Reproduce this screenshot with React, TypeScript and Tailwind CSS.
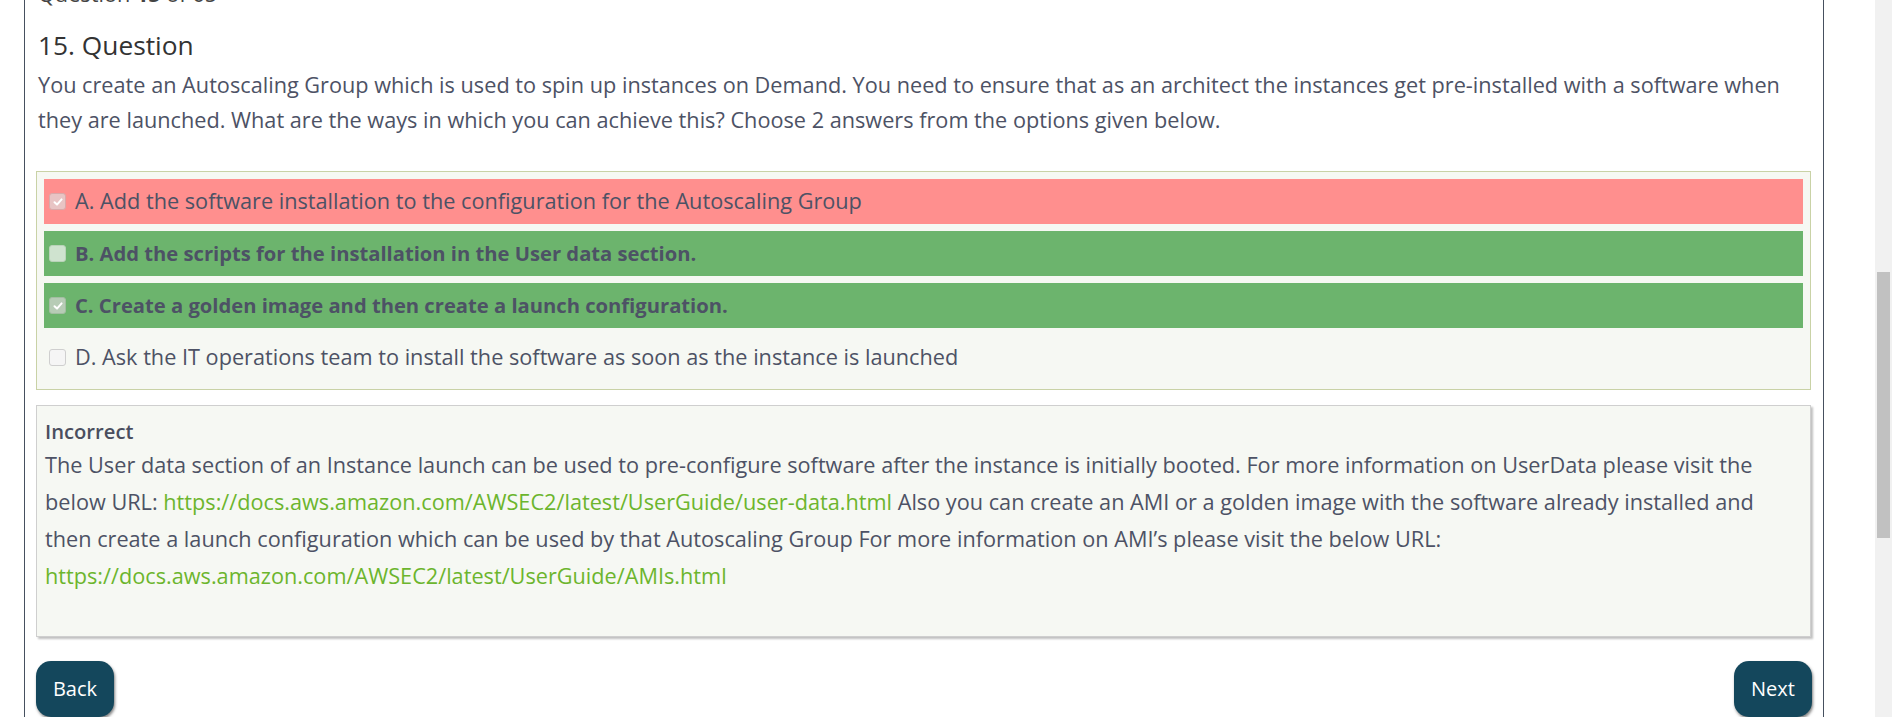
import React from "react";

const font = { fontFamily: '"Open Sans", "Noto Sans", sans-serif' };

function Check({ checked, variant }: { checked: boolean; variant: "red" | "green" | "plain" }) {
  const cls =
    variant === "red"
      ? "bg-[#e8c4c4] border-[#d9a9a9]"
      : variant === "green"
      ? checked
        ? "bg-[#b7ccb6] border-[#a3bda2]"
        : "bg-[#cfe3cf] border-[#b9d3b9]"
      : "bg-[#f5f5f5] border-[#cfcfcf]";
  return (
    <span className={`inline-flex items-center justify-center w-[17px] h-[17px] rounded-[3px] border ${cls} mr-[9px] shrink-0`}>
      {checked && (
        <svg width="12" height="12" viewBox="0 0 12 12">
          <path d="M2.5 6.3 L5 8.6 L9.6 3.4" fill="none" stroke="#ffffff" strokeWidth="2" strokeLinecap="round" strokeLinejoin="round" />
        </svg>
      )}
    </span>
  );
}

function Option({
  text,
  bg,
  bold,
  checked,
  variant,
}: {
  text: string;
  bg: string;
  bold?: boolean;
  checked: boolean;
  variant: "red" | "green" | "plain";
}) {
  return (
    <div className={`flex items-center h-[45px] pl-[5px] ${bg}`}>
      <Check checked={checked} variant={variant} />
      <span className={`${bold ? "font-bold text-[20.2px]" : "text-[21.7px]"} text-[#4d5265] whitespace-nowrap`}>{text}</span>
    </div>
  );
}

export default function App() {
  return (
    <div className="flex h-[717px] w-[1892px] overflow-hidden bg-white" style={font}>
      <div className="flex-1 flex">
        <div className="ml-[24px] w-[1800px] border-l border-r border-[#46505f] px-[11px] flex flex-col">
          <div className="-mt-[19px] h-[26px] text-[21.7px] leading-[26px] text-[#444] pl-[2px]">
            Question <span className="font-bold">15</span> of 65
          </div>
          <div className="mt-[22px] text-[26.3px] leading-[32px] text-[#333] pl-[2px]">15. Question</div>
          <p className="mt-[6px] text-[21.7px] leading-[35px] text-[#4d5265] pl-[2px]">
            You create an Autoscaling Group which is used to spin up instances on Demand. You need to ensure that as an architect the instances get pre-installed with a software when they are launched. What are the ways in which you can achieve this? Choose 2 answers from the options given below.
          </p>
          <div className="mt-[34px] border border-[#c9d2a6] bg-[#f6f8f3] px-[7px] pt-[7px] pb-[9px] flex flex-col gap-[7px] w-[1775px]">
            <Option text="A. Add the software installation to the configuration for the Autoscaling Group" bg="bg-[#ff8f8e]" checked variant="red" />
            <Option text="B. Add the scripts for the installation in the User data section." bg="bg-[#6cb46d]" bold checked={false} variant="green" />
            <Option text="C. Create a golden image and then create a launch configuration." bg="bg-[#6cb46d]" bold checked variant="green" />
            <Option text="D. Ask the IT operations team to install the software as soon as the instance is launched" bg="" checked={false} variant="plain" />
          </div>
          <div className="mt-[15px] w-[1775px] h-[232px] border border-[#cfcfcf] bg-[#f6f8f3] shadow-[2px_2px_2px_rgba(0,0,0,0.25)] px-[8px] pt-[12px]">
            <div className="text-[20.2px] leading-[26px] font-semibold text-[#4a4e5e]">Incorrect</div>
            <p className="mt-[2px] text-[21.7px] leading-[37px] text-[#4d5265]">
              The User data section of an Instance launch can be used to pre-configure software after the instance is initially booted. For more information on UserData please visit the below URL:{" "}
              <span className="text-[#6cb52d]">https://docs.aws.amazon.com/AWSEC2/latest/UserGuide/user-data.html</span> Also you can create an AMI or a golden image with the software already installed and then create a launch configuration which can be used by that Autoscaling Group For more information on AMI’s please visit the below URL:{" "}
              <span className="text-[#6cb52d]">https://docs.aws.amazon.com/AWSEC2/latest/UserGuide/AMIs.html</span>
            </p>
          </div>
          <div className="mt-[24px] flex justify-between w-[1776px]">
            <button className="h-[56px] w-[78px] rounded-[15px] bg-[#14475c] text-white text-[20px] shadow-[1px_2px_3px_rgba(0,0,0,0.5)]">
              Back
            </button>
            <button className="h-[56px] w-[78px] rounded-[15px] bg-[#14475c] text-white text-[20px] shadow-[1px_2px_3px_rgba(0,0,0,0.5)]">
              Next
            </button>
          </div>
        </div>
      </div>
      <div className="w-[17px] bg-[#f1f1f1] flex flex-col">
        <div className="mt-[272px] mx-[2px] h-[266px] bg-[#c1c1c1]" />
      </div>
    </div>
  );
}
